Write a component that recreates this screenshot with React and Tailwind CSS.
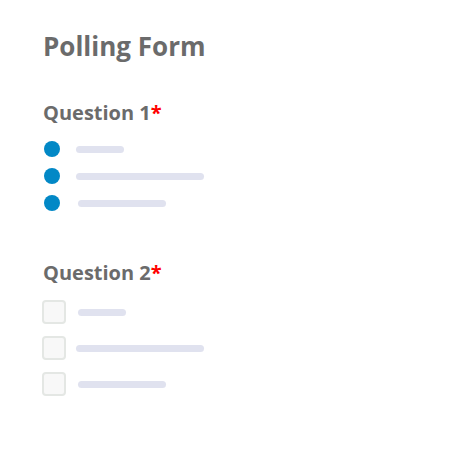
const Dot = () => <div className="w-4 h-4 rounded-full bg-[#0288c6] shrink-0" />;
const Box = () => <div className="w-6 h-6 rounded-[4px] border-2 border-[#e4e7e4] bg-[#f8f8f8] shrink-0" />;
const Bar = ({ w, ml }) => <div className={`h-[7px] rounded-full bg-[#e0e2ef] ${w} ${ml}`} />;

export default function App() {
  return (
    <div className="w-[474px] h-[452px] bg-white font-['Open_Sans',sans-serif] text-[#6b6b6b] pl-[43px] pt-[28px]">
      <h1 className="text-[26px] font-bold leading-[36px]">Polling Form</h1>

      <div className="mt-[35px] text-[20px] font-bold leading-[28px]">
        Question 1<span className="text-[#ff0000]">*</span>
      </div>
      <div className="mt-[14px] flex flex-col gap-[11px] pl-[1px]">
        <div className="flex items-center h-4"><Dot /><Bar w="w-[48px]" ml="ml-[16px]" /></div>
        <div className="flex items-center h-4"><Dot /><Bar w="w-[128px]" ml="ml-[16px]" /></div>
        <div className="flex items-center h-4"><Dot /><Bar w="w-[88px]" ml="ml-[18px]" /></div>
      </div>

      <div className="mt-[48px] text-[20px] font-bold leading-[28px]">
        Question 2<span className="text-[#ff0000]">*</span>
      </div>
      <div className="mt-[13px] flex flex-col gap-[12px] -ml-[1px]">
        <div className="flex items-center"><Box /><Bar w="w-[48px]" ml="ml-[12px]" /></div>
        <div className="flex items-center"><Box /><Bar w="w-[128px]" ml="ml-[10px]" /></div>
        <div className="flex items-center"><Box /><Bar w="w-[88px]" ml="ml-[12px]" /></div>
      </div>
    </div>
  );
}
